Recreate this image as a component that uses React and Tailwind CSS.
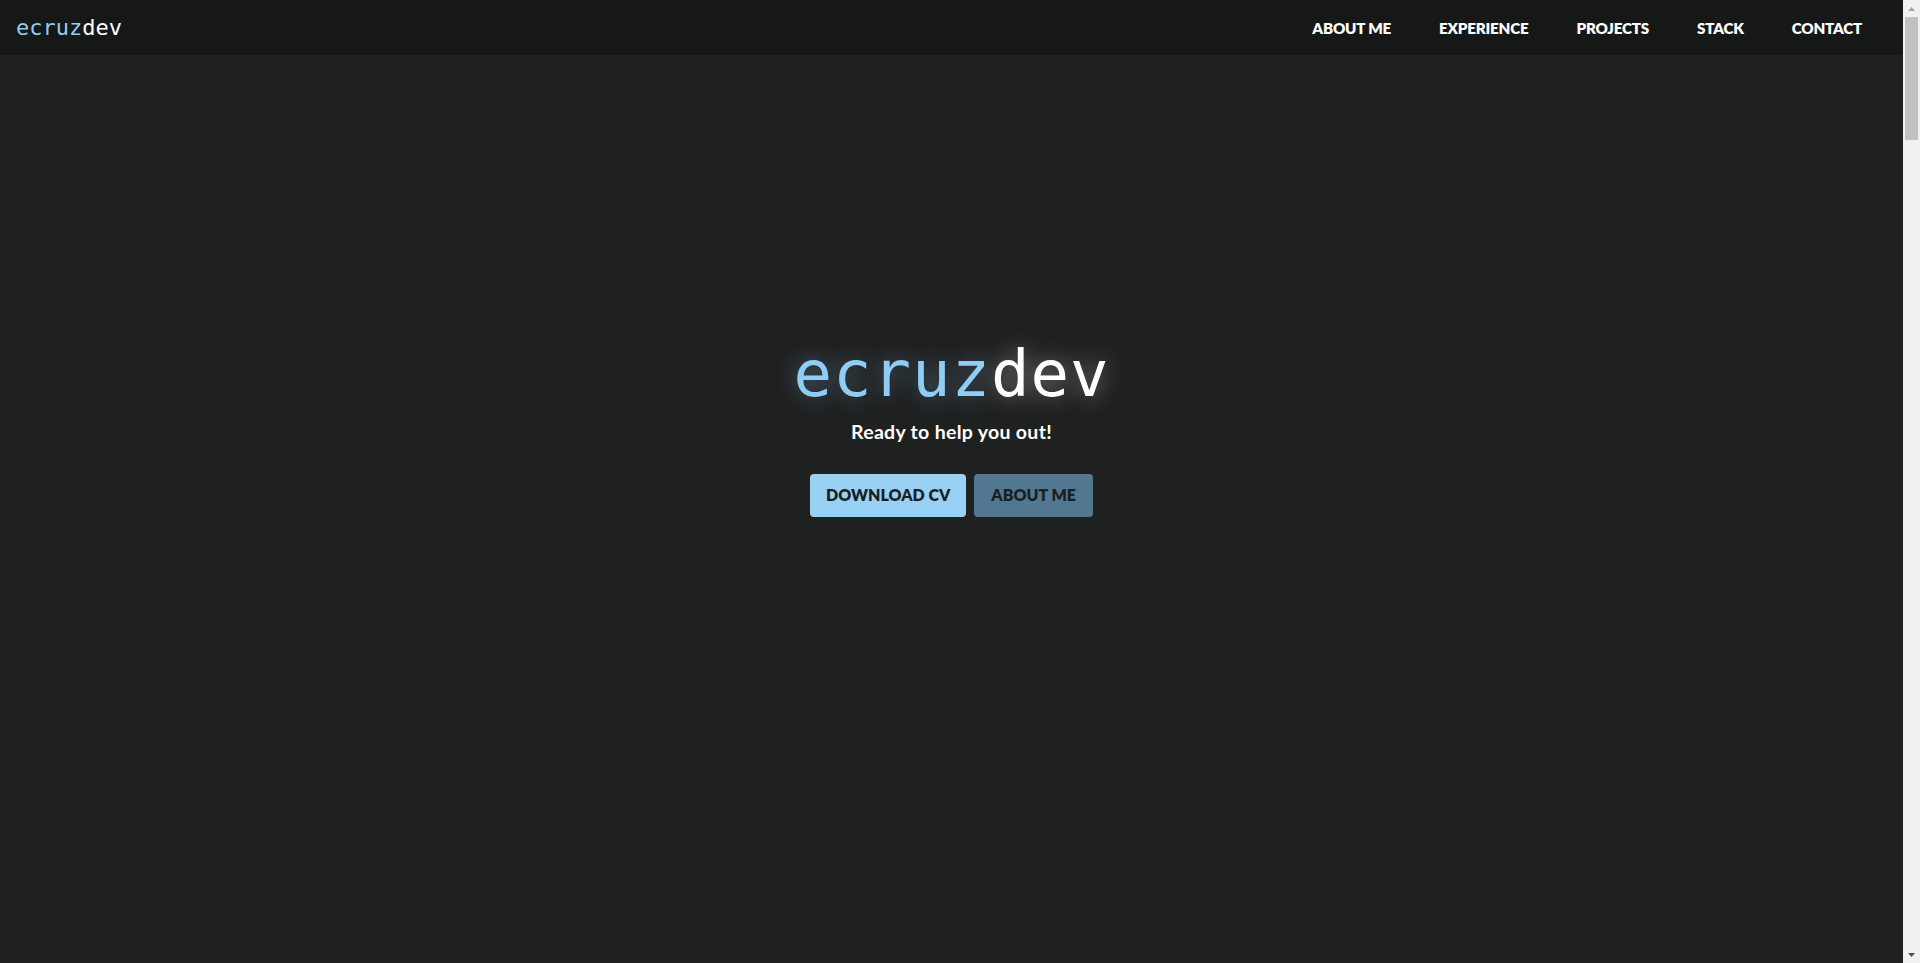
import React from 'react';

const links = ['ABOUT ME', 'EXPERIENCE', 'PROJECTS', 'STACK', 'CONTACT'];

const Navbar = () => {
  return (
    <nav className="h-[55px] bg-[#161717] flex items-center justify-between pl-[16px] pr-[41px]">
      <a href="#" className="font-['DejaVu_Sans_Mono',monospace] text-[22px] leading-none">
        <span className="text-[#90cdf4]">ecruz</span>
        <span className="text-white">dev</span>
      </a>
      <ul className="flex items-center gap-[48px]">
        {links.map((link) => (
          <li key={link}>
            <a href="#" className="font-['Lato',sans-serif] font-extrabold text-[15.2px] text-white tracking-[-0.2px]">
              {link}
            </a>
          </li>
        ))}
      </ul>
    </nav>
  );
};

const Hero = () => {
  return (
    <section className="h-[908px] flex flex-col items-center pt-[287px]">
      <h1 className="font-['DejaVu_Sans_Mono',monospace] text-[64px] leading-none tracking-[1px]">
        <span className="text-[#90cdf4] [text-shadow:0_0_22px_rgba(144,205,244,0.45)]">ecruz</span>
        <span className="text-white [text-shadow:0_0_22px_rgba(255,255,255,0.45)]">dev</span>
      </h1>
      <p className="mt-4 font-['Lato',sans-serif] font-bold text-[19.5px] leading-none tracking-[0.3px] text-white">
        Ready to help you out!
      </p>
      <div className="mt-[32px] flex gap-2">
        <button className="h-[43px] px-[16px] rounded bg-[#99d1f5] font-['Lato',sans-serif] font-extrabold text-[16px] text-[#1c1f22]">
          DOWNLOAD CV
        </button>
        <button className="h-[43px] px-[17px] rounded bg-[#527791] font-['Lato',sans-serif] font-extrabold text-[16px] text-[#1c1f22]">
          ABOUT ME
        </button>
      </div>
    </section>
  );
};

// page scrollbar as it shows in the window
const Scrollbar = () => {
  return (
    <aside className="w-[17px] h-screen shrink-0 bg-[#f1f1f1] flex flex-col">
      <div className="h-[17px] flex items-center justify-center">
        <svg width="7" height="4" viewBox="0 0 7 4">
          <path d="M3.5 0L7 4H0Z" fill="#a3a3a3" />
        </svg>
      </div>
      <div className="h-[123px] mx-[2px] bg-[#c1c1c1]" />
      <div className="flex-1" />
      <div className="h-[17px] flex items-center justify-center">
        <svg width="7" height="4" viewBox="0 0 7 4">
          <path d="M0 0H7L3.5 4Z" fill="#505050" />
        </svg>
      </div>
    </aside>
  );
};

export default function App() {
  return (
    <div className="h-screen flex overflow-hidden bg-[#1f2020]">
      <div className="flex-1 min-w-0 overflow-hidden">
        <Navbar />
        <Hero />
      </div>
      <Scrollbar />
    </div>
  );
}
